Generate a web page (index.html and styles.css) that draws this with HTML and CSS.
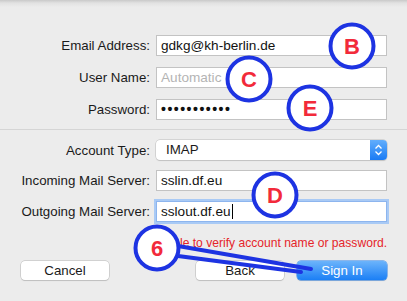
FILE: index.html
```html
<!DOCTYPE html>
<html lang="en">
<head>
    <meta charset="UTF-8">
    <title>Add Account</title>
    <link rel="stylesheet" href="styles.css">
</head>
<body>
    <div class="sheet">
        <div class="form-grid top-group">
            <label class="form-label">Email Address:</label>
            <div class="field">gdkg@kh-berlin.de</div>

            <label class="form-label">User Name:</label>
            <div class="field placeholder">Automatic</div>

            <label class="form-label">Password:</label>
            <div class="field password">•••••••••••</div>
        </div>

        <div class="divider"></div>

        <div class="form-grid bottom-group">
            <label class="form-label">Account Type:</label>
            <div class="popup">
                <span class="popup-value">IMAP</span>
                <span class="stepper">
                    <svg width="9" height="12" viewBox="0 0 9 12">
                        <path d="M1.5 4.5 L4.5 1.5 L7.5 4.5 M1.5 7.5 L4.5 10.5 L7.5 7.5" fill="none" stroke="#fff" stroke-width="1.3"/>
                    </svg>
                </span>
            </div>

            <label class="form-label">Incoming Mail Server:</label>
            <div class="field">sslin.df.eu</div>

            <label class="form-label">Outgoing Mail Server:</label>
            <div class="field focused">sslout.df.eu<span class="caret"></span></div>
        </div>

        <p class="error-text">Unable to verify account name or password.</p>

        <div class="button-row">
            <button class="btn">Cancel</button>
            <div class="button-group">
                <button class="btn">Back</button>
                <button class="btn primary">Sign In</button>
            </div>
        </div>

        <!-- markers drawn on top of the dialog -->
        <svg class="annotations" width="407" height="301" viewBox="0 0 407 301">
            <line x1="178" y1="246" x2="311" y2="269" class="arrow"/>
            <line x1="178" y1="256" x2="301" y2="272" class="arrow"/>
            <g class="marker">
                <circle cx="352" cy="46" r="21.5"/>
                <text x="352" y="54">B</text>
            </g>
            <g class="marker">
                <circle cx="249" cy="79" r="21.5"/>
                <text x="249" y="87">C</text>
            </g>
            <g class="marker">
                <circle cx="310" cy="108" r="21.5"/>
                <text x="310" y="116">E</text>
            </g>
            <g class="marker">
                <circle cx="275" cy="195" r="21.5"/>
                <text x="275" y="203">D</text>
            </g>
            <g class="marker">
                <circle cx="157" cy="248" r="21.5"/>
                <text x="157" y="256">6</text>
            </g>
        </svg>
    </div>
</body>
</html>
```

FILE: styles.css
```css
* {
    margin: 0;
    padding: 0;
    box-sizing: border-box;
}

body {
    font-family: 'Liberation Sans', Arial, sans-serif;
    font-size: 13.3px;
    color: #1a1a1a;
    background: #ececec;
}

.sheet {
    position: relative;
    width: 407px;
    height: 301px;
    background: linear-gradient(to bottom, #c9c9c9 0px, #e2e2e2 3px, #ececec 7px);
    overflow: hidden;
}

.form-grid {
    display: grid;
    grid-template-columns: 150px 231px;
    column-gap: 6px;
    align-items: center;
}

.top-group {
    padding-top: 35px;
    row-gap: 11px;
    padding-bottom: 9px;
}

.bottom-group {
    padding-top: 10px;
    row-gap: 10px;
}

.form-label {
    text-align: right;
    white-space: nowrap;
}

.field {
    height: 21px;
    line-height: 19px;
    padding-left: 4px;
    background: #fff;
    border: 1px solid #c3c3c3;
    color: #111;
    white-space: nowrap;
    font-size: 13.6px;
}

.placeholder {
    color: #b4b4b4;
}

.password {
    letter-spacing: 1.5px;
    font-size: 14px;
    font-weight: bold;
}

.focused {
    border-color: #8db5ee;
    box-shadow: 0 0 0 2px #a9caf5;
}

.caret {
    display: inline-block;
    width: 1px;
    height: 15px;
    background: #000;
    vertical-align: -3px;
    margin-left: 1px;
}

.divider {
    height: 1px;
    background: #d5d5d5;
}

.popup {
    display: flex;
    height: 20px;
    background: #fff;
    border-radius: 4px;
    box-shadow: 0 0 0 0.5px #bbb, 0 1px 1px rgba(0,0,0,0.15);
    overflow: hidden;
}

.popup-value {
    flex: 1;
    line-height: 20px;
    padding-left: 10px;
}

.stepper {
    width: 17px;
    display: flex;
    align-items: center;
    justify-content: center;
    background: linear-gradient(to bottom, #62aefc, #1a7bf4);
}

.error-text {
    margin: 14px 20px 0 0;
    text-align: right;
    color: #e5242a;
    font-size: 12.1px;
    line-height: 14px;
}

.button-row {
    display: flex;
    justify-content: space-between;
    padding: 11px 20px 0 21px;
}

.button-group {
    display: flex;
    gap: 13px;
}

.btn {
    font-family: inherit;
    font-size: 13.3px;
    color: #1a1a1a;
    width: 88px;
    height: 19px;
    background: #fff;
    border: none;
    border-radius: 4px;
    box-shadow: 0 0 0 0.5px #b5b5b5, 0 1px 1px rgba(0,0,0,0.15);
}

.btn.primary {
    width: 90px;
    color: #fff;
    background: linear-gradient(to bottom, #6cb4fb, #1b7ff5);
    box-shadow: 0 0 0 0.5px #2b80e8, 0 1px 1px rgba(0,0,0,0.15);
}

.annotations {
    position: absolute;
    left: 0;
    top: 0;
    pointer-events: none;
}

.arrow {
    stroke: #1d33e2;
    stroke-width: 4;
    stroke-linecap: round;
}

.marker circle {
    fill: #fff;
    stroke: #1d33e2;
    stroke-width: 4;
}

.marker text {
    fill: #f22a3a;
    font-family: 'Liberation Sans', Arial, sans-serif;
    font-weight: bold;
    font-size: 22px;
    text-anchor: middle;
}
```
